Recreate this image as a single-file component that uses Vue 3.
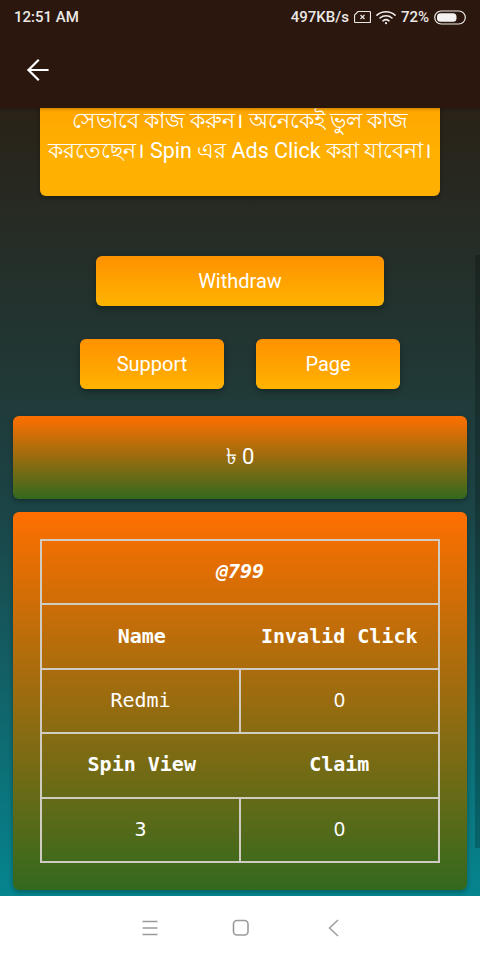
<script setup>
const rows = [
  { type: 'head', cells: ['Name', 'Invalid Click'] },
  { type: 'data', cells: ['Redmi', '0'] },
  { type: 'head', cells: ['Spin View', 'Claim'] },
  { type: 'data', cells: ['3', '0'] }
]
</script>

<template>
  <div class="screen">
    <header class="appbar">
      <div class="status">
        <span class="clock">12:51 AM</span>
        <div class="status-right">
          <span>497KB/s</span>
          <svg width="17" height="14" viewBox="0 0 17 14" fill="none" stroke="#e8e6e4" stroke-width="1.2">
            <path d="M4 1.500h11.500a1 1 0 0 1 1 1v9a1 1 0 0 1-1 1H1.500a1 1 0 0 1-1-1V5z" />
            <path d="M6.500 5l4 4M10.500 5l-4 4" />
          </svg>
          <svg class="wifi" width="20" height="15" viewBox="0 0 20 15" fill="none" stroke="#f0eeec" stroke-width="1.6" stroke-linecap="round">
            <path d="M1 5.200c5-4.600 13-4.600 18 0" />
            <path d="M4 8c3.400-3 8.600-3 12 0" />
            <path d="M7 10.800c1.800-1.500 4.200-1.500 6 0" />
            <circle cx="10" cy="13.200" r="1.100" fill="#f0eeec" stroke="none" />
          </svg>
          <span class="pct">72%</span>
          <svg width="32" height="15" viewBox="0 0 32 15" fill="none">
            <rect x="0.700" y="1" width="30.600" height="13" rx="6.500" stroke="#ece9e7" stroke-width="1.200" />
            <rect x="3" y="3.200" width="19.500" height="8.600" rx="3.500" fill="#f4f2f0" />
          </svg>
        </div>
      </div>
      <div class="toolbar">
        <svg width="24" height="24" viewBox="0 0 24 24" fill="none" stroke="#fff" stroke-width="2.200" stroke-linecap="square">
          <path d="M21.500 12H2.500M12 2.500L2.500 12l9.500 9.500" />
        </svg>
      </div>
    </header>

    <main class="content">
      <div class="notice">
        <p>সেভাবে কাজ করুন। অনেকেই ভুল কাজ করতেছেন। Spin এর Ads Click করা যাবেনা।</p>
      </div>
      <button class="btn btn-wide">Withdraw</button>
      <div class="btn-row">
        <button class="btn btn-small">Support</button>
        <button class="btn btn-small">Page</button>
      </div>
      <div class="balance">৳ 0</div>
      <section class="card">
        <table>
          <tbody>
            <tr>
              <th class="title" colspan="2">@799</th>
            </tr>
            <tr v-for="(row, i) in rows" :key="i">
              <template v-if="row.type === 'head'">
                <th colspan="2">
                  <div class="heads"><span>{{ row.cells[0] }}</span><span>{{ row.cells[1] }}</span></div>
                </th>
              </template>
              <template v-else>
                <td v-for="(cell, c) in row.cells" :key="c" :class="{ zero: cell === '0' }">{{ cell }}</td>
              </template>
            </tr>
          </tbody>
        </table>
      </section>
      <div class="scrollbar"></div>
    </main>

    <nav class="navbar">
      <svg width="18" height="16" viewBox="0 0 18 16" stroke="#9a9a9a" stroke-width="1.400" fill="none">
        <path d="M1.500 1.500h15M1.500 8h15M1.500 14.500h15" />
      </svg>
      <svg width="18" height="18" viewBox="0 0 18 18" stroke="#9a9a9a" stroke-width="1.600" fill="none">
        <rect x="1.500" y="1.500" width="14.500" height="14.500" rx="3.500" />
      </svg>
      <svg class="chevron" width="14" height="18" viewBox="0 0 14 18" stroke="#9a9a9a" stroke-width="1.400" fill="none">
        <path d="M12 1L3.500 9l8.500 8" />
      </svg>
    </nav>
  </div>
</template>

<style>
html, body { margin: 0; padding: 0; background: #fff; }
</style>

<style scoped>
.screen {
  width: 480px;
  height: 960px;
  display: flex;
  flex-direction: column;
  overflow: hidden;
  font-family: Roboto, "Noto Sans", sans-serif;
  color: #fff;
}
.appbar {
  height: 108px;
  flex: none;
  background: #2b170d;
  position: relative;
  z-index: 2;
  box-shadow: 0 1px 3px rgba(0, 0, 0, 0.25);
}
.status {
  height: 34px;
  display: flex;
  align-items: center;
  justify-content: space-between;
  padding: 0 14px;
  font-size: 15px;
  font-weight: 500;
  color: #ece9e7;
}
.status-right {
  display: flex;
  align-items: center;
  gap: 5px;
}
.toolbar {
  height: 72px;
  display: flex;
  align-items: center;
  padding-left: 26px;
}
.content {
  flex: 1;
  min-height: 0;
  position: relative;
  display: flex;
  flex-direction: column;
  justify-content: flex-end;
  align-items: center;
  padding: 0 13px 6px;
  overflow: hidden;
  background: linear-gradient(180deg, #2a2217 0%, #1c4345 50%, #05858f 100%);
}
.content > * { flex: none; }
.notice {
  width: 400px;
  padding: 0 4px 30px;
  box-sizing: border-box;
  background: linear-gradient(180deg, #ffa600 0%, #ffb000 55%);
  border-radius: 0 0 6px 6px;
  box-shadow: 0 2px 4px rgba(0, 0, 0, 0.3);
  font-size: 21.5px;
  line-height: 30px;
  text-align: center;
}
.notice p { margin: 0; }
.btn {
  border: 0;
  height: 50px;
  border-radius: 6px;
  font-family: inherit;
  font-size: 20px;
  color: #fff;
  background: linear-gradient(180deg, #ff9100 0%, #ffb300 100%);
  box-shadow: 0 3px 6px rgba(0, 0, 0, 0.3);
}
.btn-wide {
  width: 288px;
  margin-top: 60px;
}
.btn-row {
  display: flex;
  gap: 32px;
  margin-top: 33px;
}
.btn-small { width: 144px; }
.balance {
  align-self: stretch;
  height: 83px;
  margin-top: 27px;
  border-radius: 6px;
  display: flex;
  align-items: center;
  justify-content: center;
  font-size: 22px;
  background: linear-gradient(180deg, #ff6f00 0%, #33691e 100%);
  box-shadow: 0 2px 5px rgba(0, 0, 0, 0.3);
}
.card {
  align-self: stretch;
  height: 378px;
  box-sizing: border-box;
  margin-top: 13px;
  padding: 27px;
  border-radius: 6px;
  background: linear-gradient(180deg, #ff6f00 0%, #33691e 100%);
  box-shadow: 0 2px 5px rgba(0, 0, 0, 0.3);
}
table {
  width: 100%;
  height: 324px;
  border-collapse: collapse;
  table-layout: fixed;
  font-family: "DejaVu Sans Mono", monospace;
  font-size: 20px;
}
tr { height: 20%; }
th, td {
  border: 2px solid #d0ccc2;
  padding: 0 0 2px;
  text-align: center;
  font-weight: 400;
  line-height: 24px;
}
th { font-weight: 700; }
.title { font-style: italic; }
.zero { font-family: "Noto Sans", sans-serif; }
.heads {
  display: grid;
  grid-template-columns: 1fr 1fr;
  padding-left: 1px;
}
.scrollbar {
  position: absolute;
  right: 0;
  top: 147px;
  width: 5px;
  height: 593px;
  background: rgba(0, 0, 0, 0.2);
}
.navbar {
  height: 64px;
  flex: none;
  background: #fff;
  display: flex;
  align-items: center;
  gap: 73px;
  padding-left: 141px;
}
.chevron { margin-left: 3px; }
</style>
